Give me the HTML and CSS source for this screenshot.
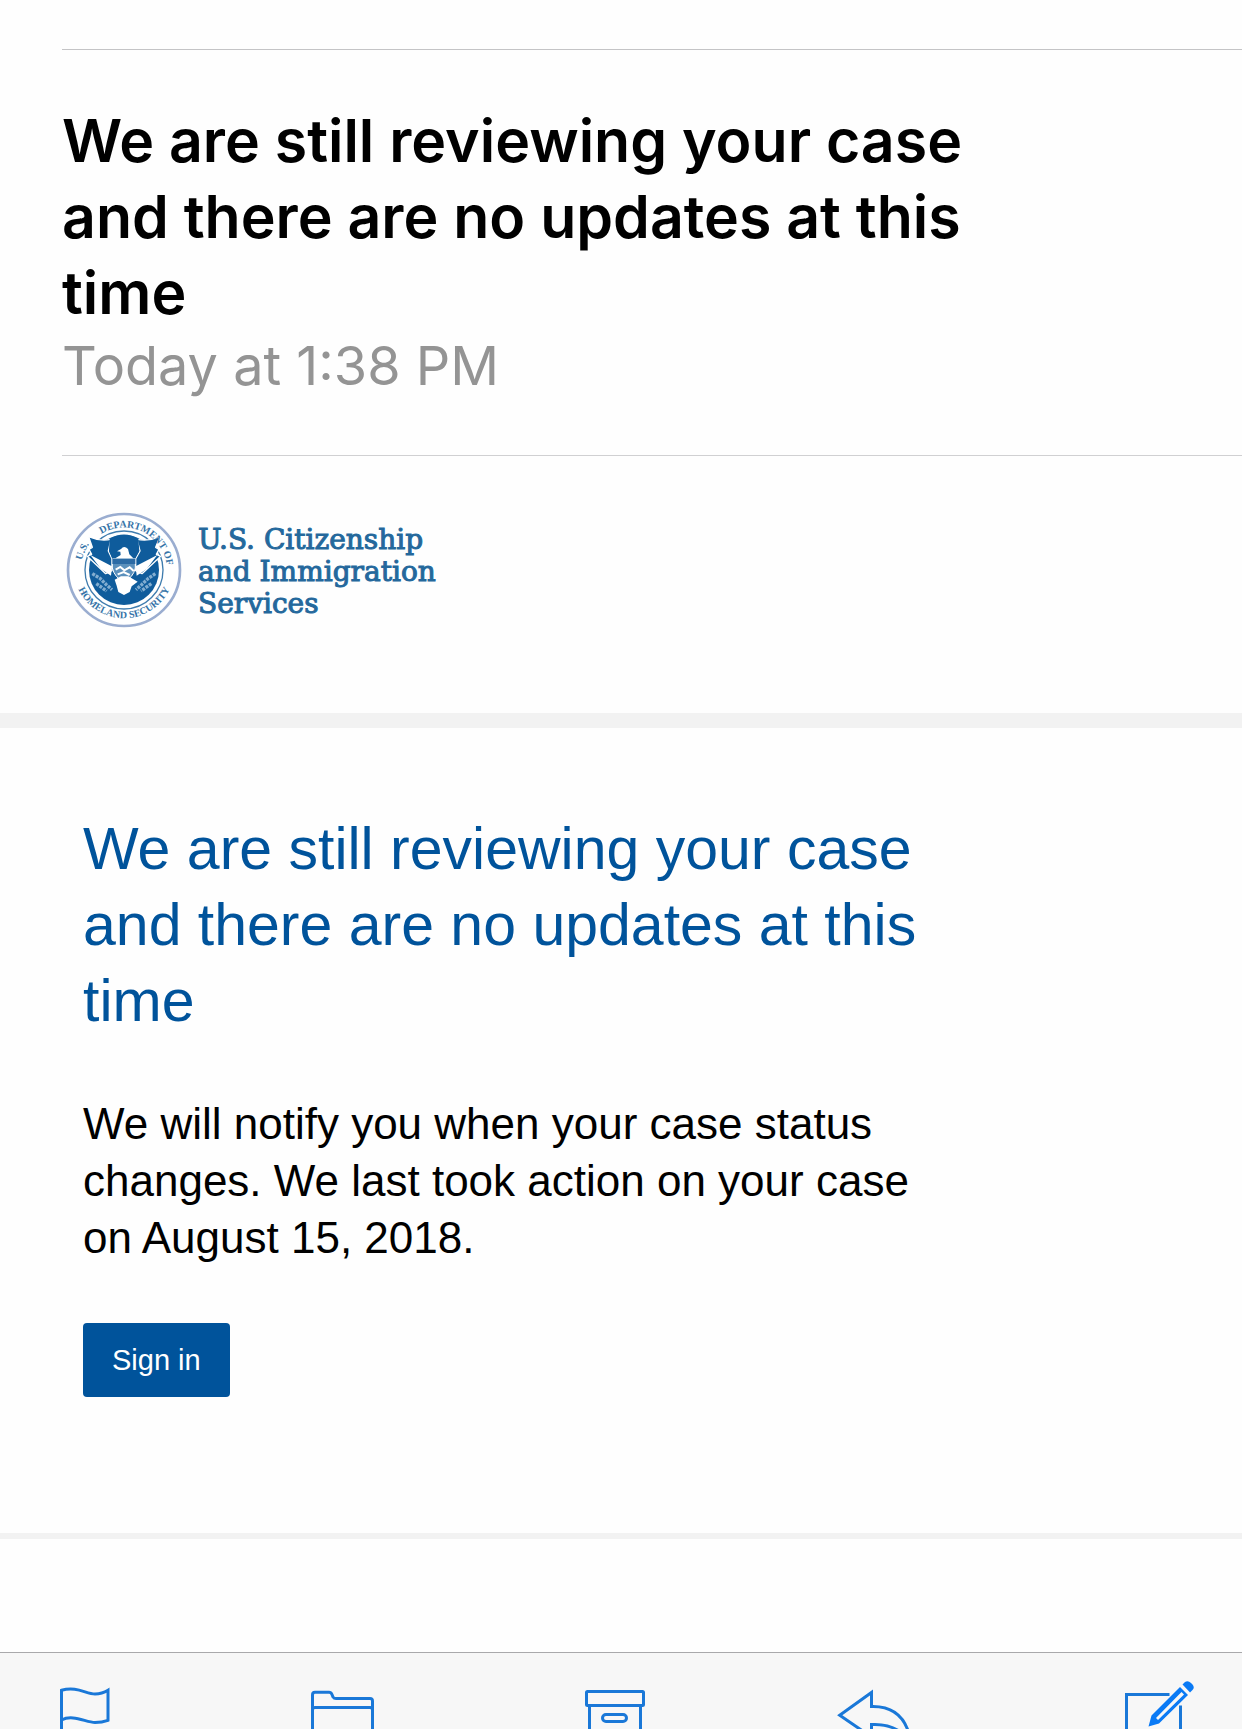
FILE: index.html
```html
<!DOCTYPE html>
<html lang="en">
  <head>
    <meta charset="UTF-8" />
    <meta name="viewport" content="width=device-width, initial-scale=1.0" />
    <title>We are still reviewing your case | Mail</title>
    <link rel="stylesheet" href="styles.css">
  </head>

  <body>
    <main>
      <header class="mail-header">
        <h1>We are still reviewing your case and there are no updates at this time</h1>
        <p class="mail-date">Today at 1:38 PM</p>
      </header>

      <div class="brand">
        <svg class="seal" viewBox="49 37 348 348" aria-label="U.S. Department of Homeland Security seal">
          <defs>
            <path id="arc-us" d="M97 182 A130 130 0 0 1 140 111" />
            <path id="arc-dept" d="M142 112 A129 129 0 0 1 343 166" />
            <path id="arc-of" d="M340 158 A129 129 0 0 1 352 214" />
            <path id="arc-bottom" d="M73 222 A151 151 0 0 0 373 222" />
          </defs>
          <circle cx="223" cy="211" r="168" fill="#fff" stroke="#9aadd0" stroke-width="8" />
          <circle cx="223" cy="211" r="117" fill="#fff" stroke="#3f7cae" stroke-width="4" />
          <circle cx="223" cy="211" r="105" fill="#0f5c9c" />
          <!-- eagle wings -->
          <path d="M117 111 Q151 126 184 119 L176 154 L187 177 L187 213 L168 222 L113 170 L126 164 L118 149 L128 143 Z" fill="#0f5c9c" stroke="#fff" stroke-width="4" stroke-linejoin="round" />
          <path d="M331 111 Q297 126 262 119 L271 154 L258 177 L258 213 L277 222 L333 170 L320 164 L328 149 L318 143 Z" fill="#0f5c9c" stroke="#fff" stroke-width="4" stroke-linejoin="round" />
          <path d="M180 117 Q223 92 266 117 L269 154 L256 178 H188 L178 154 Z" fill="#0f5c9c" />
          <path d="M122 166 L187 200 L184 228 L154 208 Z M323 166 L258 200 L261 228 L291 208 Z" fill="#fff" />
          <!-- head and shield -->
          <path d="M202 155 L214 148 Q223 136 235 148 L239 164 L251 176 L197 176 L213 166 L212 156 Z" fill="#fff" />
          <path d="M188 178 H257 V205 Q250 235 223 246 Q195 235 188 205 Z" fill="#5b90bc" stroke="#fff" stroke-width="3" />
          <path d="M188 178 H257 V193 H188 Z" fill="#2c6ba5" />
          <path d="M198 210 L212 202 L224 212 L240 203 L252 214 M204 224 L222 217 L240 226" fill="none" stroke="#fff" stroke-width="6" />
          <!-- tail and branches -->
          <path d="M195 240 L214 230 L236 230 L264 246 L246 260 L240 277 L223 286 L206 277 L201 258 Z" fill="#fff" />
          <path d="M128 222 L151 236 L170 255 L187 270 M140 252 L171 274 M317 222 L296 236 L276 255 L259 270 M305 252 L274 274" fill="none" stroke="#82add0" stroke-width="10" stroke-dasharray="9 3" />
          <g class="seal-text">
            <text><textPath href="#arc-us">U.S.</textPath></text>
            <text text-anchor="middle"><textPath href="#arc-dept" startOffset="50%">DEPARTMENT</textPath></text>
            <text><textPath href="#arc-of">OF</textPath></text>
            <text text-anchor="middle"><textPath href="#arc-bottom" startOffset="50%">HOMELAND SECURITY</textPath></text>
          </g>
        </svg>
        <p class="brand-name">U.S. Citizenship<br>and Immigration<br>Services</p>
      </div>

      <section class="message">
        <h2>We are still reviewing your case and there are no updates at this time</h2>
        <p>We will notify you when your case status changes. We last took action on your case on August 15, 2018.</p>
        <a href="#" class="sign-in">Sign in</a>
      </section>
    </main>

    <footer class="toolbar">
      <button type="button" aria-label="Flag">
        <svg width="52" height="76" viewBox="0 0 52 76">
          <path d="M1.5 76 V37.3 C17 33 26 41 35 41 Q42 41 48 37.3 V67.3 Q42 69.5 35 69.5 C26 69.5 13 61 1.5 67" />
        </svg>
      </button>
      <button type="button" aria-label="Move to folder">
        <svg width="64" height="76" viewBox="0 0 64 76">
          <path d="M1.5 76 V42 Q1.5 39.3 4 39.3 H18 Q20 39.3 21 41.5 L22 44 Q23 45.5 25 45.5 H59 Q61.5 45.5 61.5 48 V76 M1.5 57 Q1.5 54.5 4 54.5 H59 Q61.5 54.5 61.5 57" />
        </svg>
      </button>
      <button type="button" aria-label="Archive">
        <svg width="60" height="76" viewBox="0 0 60 76">
          <rect x="1.5" y="38.5" width="57" height="14" rx="1" />
          <path d="M4.5 52.5 V76 M55.5 52.5 V76" />
          <rect x="17.5" y="61.5" width="24" height="7" rx="3.5" />
        </svg>
      </button>
      <button type="button" aria-label="Reply">
        <svg width="74" height="76" viewBox="0 0 74 76">
          <path d="M34.5 71.5 V84 L2.7 62.3 L34.5 39.5 V53.5 C54 53 66 62 71.5 79 M34.5 84 V71.5 C44 71 53 72 62 78" />
        </svg>
      </button>
      <button type="button" aria-label="Compose">
        <svg width="70" height="76" viewBox="0 0 70 76">
          <path d="M1.5 76 V41.5 H44.5 M55.5 52.5 V76" />
          <g class="pencil">
            <path d="M23.5 73.5 L26.5 62.5 L55 34 L63 42 L34 70.5 Z M31 65 L33 67 L59 41.5 L56.5 39 Z" />
            <path d="M57.5 31.5 L60 29 Q63 27 66 30 L67.5 31.5 Q70 34.5 67.5 37 L65 39.5 Z" />
          </g>
        </svg>
      </button>
    </footer>
  </body>
</html>
```
FILE: styles.css
```css
* {
  margin: 0;
  padding: 0;
  box-sizing: border-box;
}

body {
  display: flex;
  flex-direction: column;
  min-height: 100vh;
  font-family: "Liberation Sans", Arial, sans-serif;
  background-color: #fefefe;
  color: #000;
}

.mail-header {
  margin: 49px 0 0 62px;
  padding: 53px 0 54px;
  border-top: 1px solid #c4c4c6;
  border-bottom: 1px solid #d0d0d2;
  font-family: Inter, sans-serif;
}

h1 {
  max-width: 920px;
  font-size: 59px;
  font-weight: 600;
  line-height: 76px;
}

.mail-date {
  font-size: 54px;
  line-height: 70px;
  color: #949494;
}

.brand {
  display: flex;
  align-items: center;
  gap: 16px;
  padding: 56px 66px 85px;
}

.seal {
  width: 116px;
  height: 116px;
}

.seal-text {
  font-family: "Liberation Serif", serif;
  font-size: 30px;
  font-weight: bold;
  fill: #3674a8;
}

.brand-name {
  padding-top: 4px;
  font-family: "DejaVu Serif", serif;
  font-size: 28px;
  line-height: 32px;
  color: #24689c;
  -webkit-text-stroke: 1px #24689c;
}

.message {
  padding: 83px 83px 136px;
  border-top: 15px solid #f2f2f2;
  border-bottom: 6px solid #f2f2f2;
}

h2 {
  max-width: 860px;
  font-size: 59px;
  font-weight: normal;
  line-height: 76px;
  color: #00539b;
}

.message p {
  max-width: 860px;
  margin: 56px 0 57px;
  font-size: 44px;
  line-height: 57px;
}

.sign-in {
  display: block;
  width: fit-content;
  padding: 20px 29px;
  border-radius: 4px;
  background-color: #00539b;
  color: #fff;
  font-size: 29px;
  line-height: 34px;
  text-decoration: none;
}

.toolbar {
  display: grid;
  grid-template-columns: 251fr 274fr 252fr 288fr 70px;
  margin-top: auto;
  padding: 0 47px 0 60px;
  border-top: 1px solid #a9a9ab;
  background-color: #f7f7f7;
}

.toolbar button {
  border: none;
  background: none;
  text-align: left;
  cursor: pointer;
}

.toolbar svg {
  display: block;
  fill: none;
  stroke: #1a78d8;
  stroke-width: 3;
}

.toolbar .pencil {
  fill: #0a7af5;
  fill-rule: evenodd;
  stroke: none;
}
```
